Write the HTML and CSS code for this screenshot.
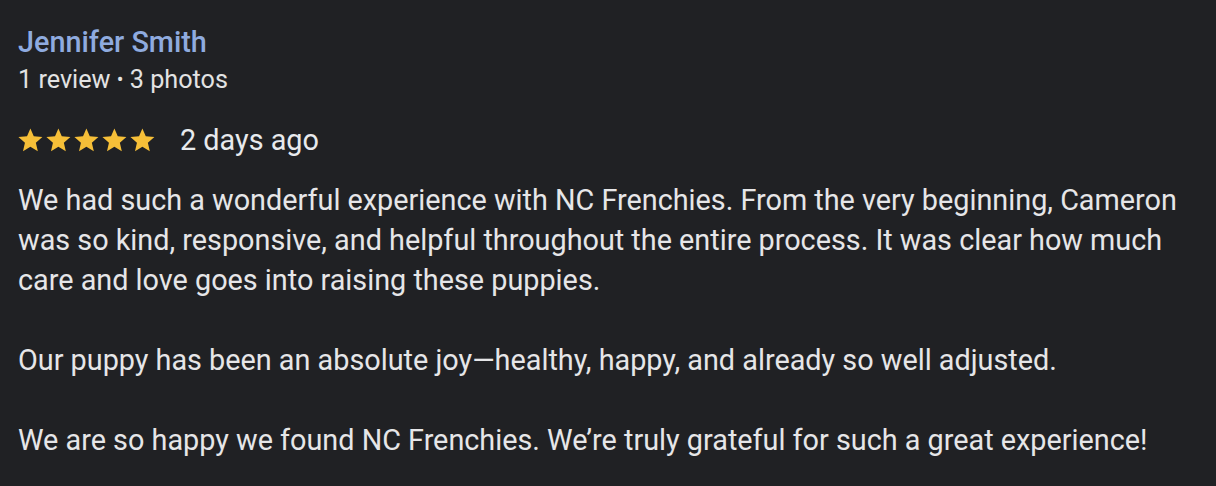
FILE: index.html
```html
<!DOCTYPE html>
<html>
<head>
<meta charset="utf-8">
<link rel="stylesheet" href="styles.css">
</head>
<body>
<div class="review">
  <div class="name">Jennifer Smith</div>
  <div class="meta">1 review <span class="dot">•</span> 3 photos</div>
  <div class="rating">
    <div class="stars">
      <svg viewBox="0 0 24 24" class="star"><path d="M12 17.27L18.18 21l-1.64-7.03L22 9.24l-7.19-.61L12 2 9.19 8.63 2 9.24l5.46 4.73L5.82 21z"/></svg>
      <svg viewBox="0 0 24 24" class="star"><path d="M12 17.27L18.18 21l-1.64-7.03L22 9.24l-7.19-.61L12 2 9.19 8.63 2 9.24l5.46 4.73L5.82 21z"/></svg>
      <svg viewBox="0 0 24 24" class="star"><path d="M12 17.27L18.18 21l-1.64-7.03L22 9.24l-7.19-.61L12 2 9.19 8.63 2 9.24l5.46 4.73L5.82 21z"/></svg>
      <svg viewBox="0 0 24 24" class="star"><path d="M12 17.27L18.18 21l-1.64-7.03L22 9.24l-7.19-.61L12 2 9.19 8.63 2 9.24l5.46 4.73L5.82 21z"/></svg>
      <svg viewBox="0 0 24 24" class="star"><path d="M12 17.27L18.18 21l-1.64-7.03L22 9.24l-7.19-.61L12 2 9.19 8.63 2 9.24l5.46 4.73L5.82 21z"/></svg>
    </div>
    <span class="date">2 days ago</span>
  </div>
  <div class="text">
    <p>We had such a wonderful experience with NC Frenchies. From the very beginning, Cameron was so kind, responsive, and helpful throughout the entire process. It was clear how much care and love goes into raising these puppies.</p>
    <p>Our puppy has been an absolute joy—healthy, happy, and already so well adjusted.</p>
    <p>We are so happy we found NC Frenchies. We’re truly grateful for such a great experience!</p>
  </div>
</div>
</body>
</html>
```

FILE: styles.css
```css
html, body {
  margin: 0;
  padding: 0;
  background: #202124;
}
body {
  font-family: Roboto, "Liberation Sans", sans-serif;
  color: #e8eaed;
}
.review {
  padding: 24px 18px 0 18px;
  width: 1190px;
}
.name {
  font-size: 28.8px;
  font-weight: 500;
  color: #8fabdf;
  line-height: 36px;
}
.meta {
  font-size: 25.2px;
  line-height: 34px;
  color: #e3e3e3;
  margin-top: 2px;
}
.dot {
  font-size: 20px;
  vertical-align: 2px;
}
.rating {
  display: flex;
  align-items: center;
  margin-top: 23px;
  height: 40px;
}
.stars {
  display: flex;
  margin-left: -2px;
}
.star {
  width: 28.8px;
  height: 28.8px;
  fill: #f6bf38;
  margin-right: -0.8px;
}
.date {
  font-size: 28.8px;
  margin-left: 24px;
  color: #e8eaed;
}
.text {
  margin-top: 20px;
  font-size: 28.8px;
  line-height: 40px;
  color: #e6e6e8;
}
.text p {
  margin: 0 0 40px 0;
}
```
